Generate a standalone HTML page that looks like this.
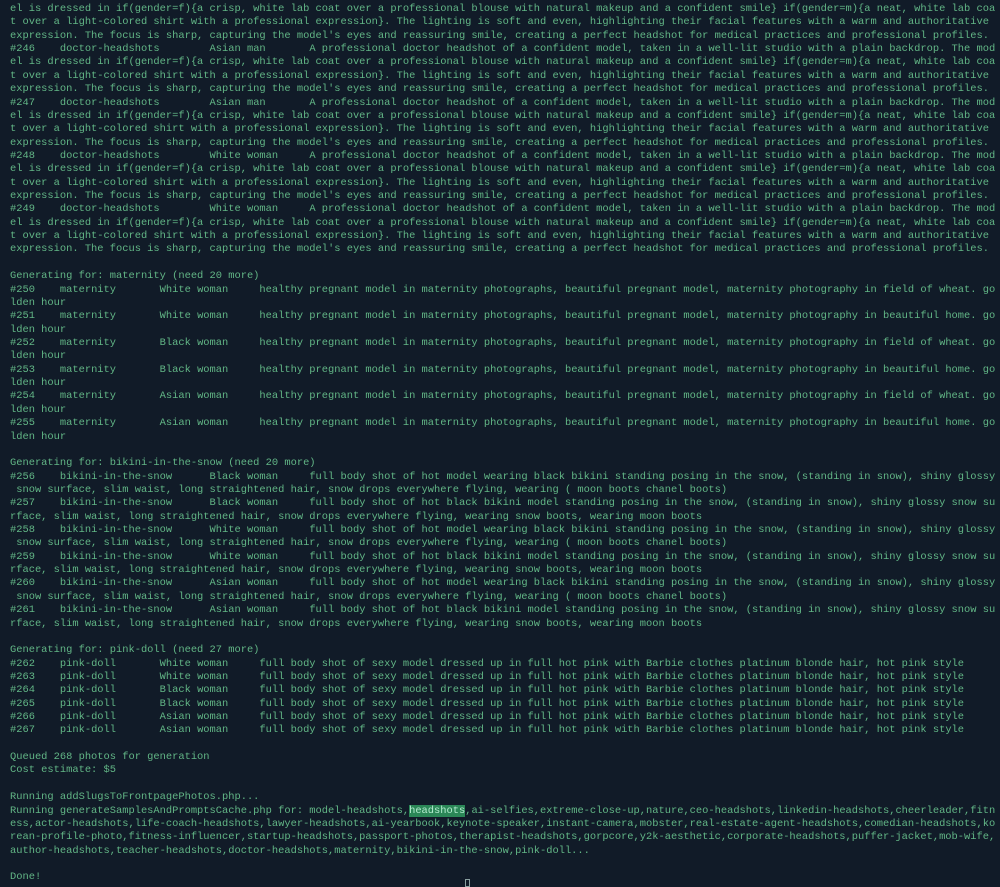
<!DOCTYPE html>
<html><head><meta charset="utf-8"><style>
html,body{margin:0;padding:0;background:#111b28;}
body{width:1000px;height:884px;overflow:hidden;position:relative;}
pre{margin:0;padding:3px 0 0 10px;font-family:"Liberation Mono","DejaVu Sans Mono",monospace;font-size:10.4px;line-height:13.36px;color:#62b686;tab-size:8;-moz-tab-size:8;white-space:pre;}
.hl{background:#2b8757;color:#b5ecd0;}
.cur{position:absolute;left:465px;top:879px;width:5px;height:8px;border:1px solid #8aa0a0;box-sizing:border-box;}
</style></head><body><pre>el is dressed in if(gender=f){a crisp, white lab coat over a professional blouse with natural makeup and a confident smile} if(gender=m){a neat, white lab coa
t over a light-colored shirt with a professional expression}. The lighting is soft and even, highlighting their facial features with a warm and authoritative
expression. The focus is sharp, capturing the model's eyes and reassuring smile, creating a perfect headshot for medical practices and professional profiles.
#246	doctor-headshots	Asian man	A professional doctor headshot of a confident model, taken in a well-lit studio with a plain backdrop. The mod
el is dressed in if(gender=f){a crisp, white lab coat over a professional blouse with natural makeup and a confident smile} if(gender=m){a neat, white lab coa
t over a light-colored shirt with a professional expression}. The lighting is soft and even, highlighting their facial features with a warm and authoritative
expression. The focus is sharp, capturing the model's eyes and reassuring smile, creating a perfect headshot for medical practices and professional profiles.
#247	doctor-headshots	Asian man	A professional doctor headshot of a confident model, taken in a well-lit studio with a plain backdrop. The mod
el is dressed in if(gender=f){a crisp, white lab coat over a professional blouse with natural makeup and a confident smile} if(gender=m){a neat, white lab coa
t over a light-colored shirt with a professional expression}. The lighting is soft and even, highlighting their facial features with a warm and authoritative
expression. The focus is sharp, capturing the model's eyes and reassuring smile, creating a perfect headshot for medical practices and professional profiles.
#248	doctor-headshots	White woman	A professional doctor headshot of a confident model, taken in a well-lit studio with a plain backdrop. The mod
el is dressed in if(gender=f){a crisp, white lab coat over a professional blouse with natural makeup and a confident smile} if(gender=m){a neat, white lab coa
t over a light-colored shirt with a professional expression}. The lighting is soft and even, highlighting their facial features with a warm and authoritative
expression. The focus is sharp, capturing the model's eyes and reassuring smile, creating a perfect headshot for medical practices and professional profiles.
#249	doctor-headshots	White woman	A professional doctor headshot of a confident model, taken in a well-lit studio with a plain backdrop. The mod
el is dressed in if(gender=f){a crisp, white lab coat over a professional blouse with natural makeup and a confident smile} if(gender=m){a neat, white lab coa
t over a light-colored shirt with a professional expression}. The lighting is soft and even, highlighting their facial features with a warm and authoritative
expression. The focus is sharp, capturing the model's eyes and reassuring smile, creating a perfect headshot for medical practices and professional profiles.

Generating for: maternity (need 20 more)
#250	maternity	White woman	healthy pregnant model in maternity photographs, beautiful pregnant model, maternity photography in field of wheat. go
lden hour
#251	maternity	White woman	healthy pregnant model in maternity photographs, beautiful pregnant model, maternity photography in beautiful home. go
lden hour
#252	maternity	Black woman	healthy pregnant model in maternity photographs, beautiful pregnant model, maternity photography in field of wheat. go
lden hour
#253	maternity	Black woman	healthy pregnant model in maternity photographs, beautiful pregnant model, maternity photography in beautiful home. go
lden hour
#254	maternity	Asian woman	healthy pregnant model in maternity photographs, beautiful pregnant model, maternity photography in field of wheat. go
lden hour
#255	maternity	Asian woman	healthy pregnant model in maternity photographs, beautiful pregnant model, maternity photography in beautiful home. go
lden hour

Generating for: bikini-in-the-snow (need 20 more)
#256	bikini-in-the-snow	Black woman	full body shot of hot model wearing black bikini standing posing in the snow, (standing in snow), shiny glossy
 snow surface, slim waist, long straightened hair, snow drops everywhere flying, wearing ( moon boots chanel boots)
#257	bikini-in-the-snow	Black woman	full body shot of hot black bikini model standing posing in the snow, (standing in snow), shiny glossy snow su
rface, slim waist, long straightened hair, snow drops everywhere flying, wearing snow boots, wearing moon boots
#258	bikini-in-the-snow	White woman	full body shot of hot model wearing black bikini standing posing in the snow, (standing in snow), shiny glossy
 snow surface, slim waist, long straightened hair, snow drops everywhere flying, wearing ( moon boots chanel boots)
#259	bikini-in-the-snow	White woman	full body shot of hot black bikini model standing posing in the snow, (standing in snow), shiny glossy snow su
rface, slim waist, long straightened hair, snow drops everywhere flying, wearing snow boots, wearing moon boots
#260	bikini-in-the-snow	Asian woman	full body shot of hot model wearing black bikini standing posing in the snow, (standing in snow), shiny glossy
 snow surface, slim waist, long straightened hair, snow drops everywhere flying, wearing ( moon boots chanel boots)
#261	bikini-in-the-snow	Asian woman	full body shot of hot black bikini model standing posing in the snow, (standing in snow), shiny glossy snow su
rface, slim waist, long straightened hair, snow drops everywhere flying, wearing snow boots, wearing moon boots

Generating for: pink-doll (need 27 more)
#262	pink-doll	White woman	full body shot of sexy model dressed up in full hot pink with Barbie clothes platinum blonde hair, hot pink style
#263	pink-doll	White woman	full body shot of sexy model dressed up in full hot pink with Barbie clothes platinum blonde hair, hot pink style
#264	pink-doll	Black woman	full body shot of sexy model dressed up in full hot pink with Barbie clothes platinum blonde hair, hot pink style
#265	pink-doll	Black woman	full body shot of sexy model dressed up in full hot pink with Barbie clothes platinum blonde hair, hot pink style
#266	pink-doll	Asian woman	full body shot of sexy model dressed up in full hot pink with Barbie clothes platinum blonde hair, hot pink style
#267	pink-doll	Asian woman	full body shot of sexy model dressed up in full hot pink with Barbie clothes platinum blonde hair, hot pink style

Queued 268 photos for generation
Cost estimate: $5

Running addSlugsToFrontpagePhotos.php...
Running generateSamplesAndPromptsCache.php for: model-headshots,<span class="hl">headshots</span>,ai-selfies,extreme-close-up,nature,ceo-headshots,linkedin-headshots,cheerleader,fitn
ess,actor-headshots,life-coach-headshots,lawyer-headshots,ai-yearbook,keynote-speaker,instant-camera,mobster,real-estate-agent-headshots,comedian-headshots,ko
rean-profile-photo,fitness-influencer,startup-headshots,passport-photos,therapist-headshots,gorpcore,y2k-aesthetic,corporate-headshots,puffer-jacket,mob-wife,
author-headshots,teacher-headshots,doctor-headshots,maternity,bikini-in-the-snow,pink-doll...

Done!</pre><div class="cur"></div></body></html>
